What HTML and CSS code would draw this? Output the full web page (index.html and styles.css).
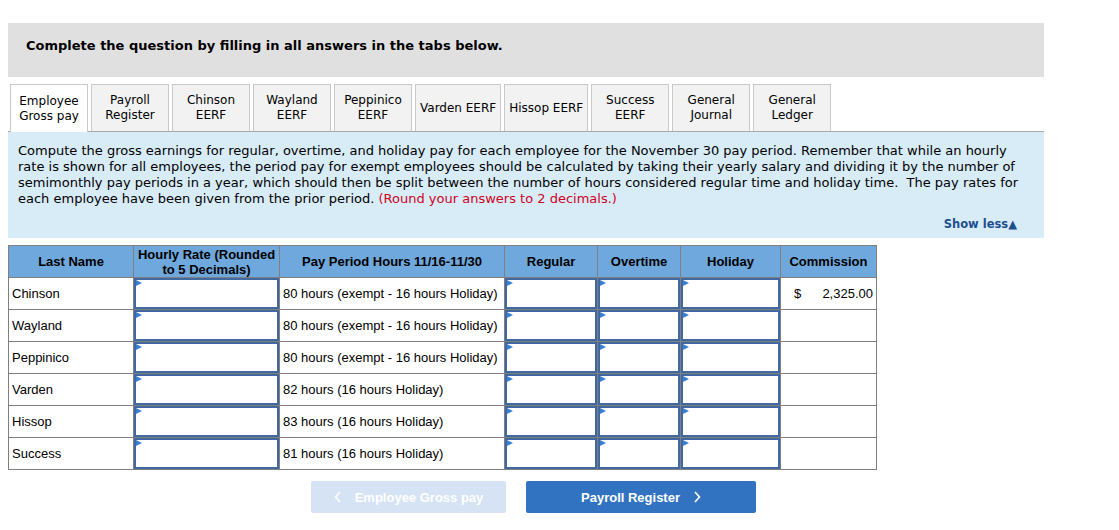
FILE: index.html
```html
<!DOCTYPE html>
<html lang="en">
<head>
    <meta charset="UTF-8">
    <title>Employee Gross pay</title>
    <link rel="stylesheet" href="styles.css">
</head>
<body>
<div class="page">
    <div class="prompt">Complete the question by filling in all answers in the tabs below.</div>

    <div class="tabs">
        <div class="tab active">Employee<br>Gross pay</div>
        <div class="tab">Payroll<br>Register</div>
        <div class="tab">Chinson<br>EERF</div>
        <div class="tab">Wayland<br>EERF</div>
        <div class="tab">Peppinico<br>EERF</div>
        <div class="tab single">Varden EERF</div>
        <div class="tab single">Hissop EERF</div>
        <div class="tab">Success<br>EERF</div>
        <div class="tab">General<br>Journal</div>
        <div class="tab">General<br>Ledger</div>
    </div>

    <div class="panel">
        <p class="instructions">Compute the gross earnings for regular, overtime, and holiday pay for each employee for the November 30 pay period. Remember that while an hourly<br>rate is shown for all employees, the period pay for exempt employees should be calculated by taking their yearly salary and dividing it by the number of<br>semimonthly pay periods in a year, which should then be split between the number of hours considered regular time and holiday time.&nbsp; The pay rates for<br>each employee have been given from the prior period. <span class="note">(Round your answers to 2 decimals.)</span></p>
        <div class="show-less">Show less&#9650;</div>
    </div>

    <table class="grid">
        <colgroup>
            <col class="c-name">
            <col class="c-rate">
            <col class="c-hours">
            <col class="c-reg">
            <col class="c-ot">
            <col class="c-hol">
            <col class="c-comm">
        </colgroup>
        <thead>
            <tr>
                <th>Last Name</th>
                <th>Hourly Rate (Rounded to 5 Decimals)</th>
                <th>Pay Period Hours 11/16-11/30</th>
                <th>Regular</th>
                <th>Overtime</th>
                <th>Holiday</th>
                <th>Commission</th>
            </tr>
        </thead>
        <tbody>
            <tr>
                <td class="name">Chinson</td>
                <td class="entry"><div class="field"><input type="text"></div></td>
                <td class="hours">80 hours (exempt - 16 hours Holiday)</td>
                <td class="entry"><div class="field"><input type="text"></div></td>
                <td class="entry"><div class="field"><input type="text"></div></td>
                <td class="entry"><div class="field"><input type="text"></div></td>
                <td class="money"><span class="cur">$</span><span class="amt">2,325.00</span></td>
            </tr>
            <tr>
                <td class="name">Wayland</td>
                <td class="entry"><div class="field"><input type="text"></div></td>
                <td class="hours">80 hours (exempt - 16 hours Holiday)</td>
                <td class="entry"><div class="field"><input type="text"></div></td>
                <td class="entry"><div class="field"><input type="text"></div></td>
                <td class="entry"><div class="field"><input type="text"></div></td>
                <td></td>
            </tr>
            <tr>
                <td class="name">Peppinico</td>
                <td class="entry"><div class="field"><input type="text"></div></td>
                <td class="hours">80 hours (exempt - 16 hours Holiday)</td>
                <td class="entry"><div class="field"><input type="text"></div></td>
                <td class="entry"><div class="field"><input type="text"></div></td>
                <td class="entry"><div class="field"><input type="text"></div></td>
                <td></td>
            </tr>
            <tr>
                <td class="name">Varden</td>
                <td class="entry"><div class="field"><input type="text"></div></td>
                <td class="hours">82 hours (16 hours Holiday)</td>
                <td class="entry"><div class="field"><input type="text"></div></td>
                <td class="entry"><div class="field"><input type="text"></div></td>
                <td class="entry"><div class="field"><input type="text"></div></td>
                <td></td>
            </tr>
            <tr>
                <td class="name">Hissop</td>
                <td class="entry"><div class="field"><input type="text"></div></td>
                <td class="hours">83 hours (16 hours Holiday)</td>
                <td class="entry"><div class="field"><input type="text"></div></td>
                <td class="entry"><div class="field"><input type="text"></div></td>
                <td class="entry"><div class="field"><input type="text"></div></td>
                <td></td>
            </tr>
            <tr>
                <td class="name">Success</td>
                <td class="entry"><div class="field"><input type="text"></div></td>
                <td class="hours">81 hours (16 hours Holiday)</td>
                <td class="entry"><div class="field"><input type="text"></div></td>
                <td class="entry"><div class="field"><input type="text"></div></td>
                <td class="entry"><div class="field"><input type="text"></div></td>
                <td></td>
            </tr>
        </tbody>
    </table>

    <div class="nav">
        <button class="nav-btn prev" disabled>
            <svg width="8" height="12" viewBox="0 0 8 12"><polyline points="6,1 1.5,6 6,11" fill="none" stroke="currentColor" stroke-width="1.6"/></svg>
            <span>Employee Gross pay</span>
        </button>
        <button class="nav-btn next">
            <span>Payroll Register</span>
            <svg width="8" height="12" viewBox="0 0 8 12"><polyline points="2,1 6.5,6 2,11" fill="none" stroke="currentColor" stroke-width="1.6"/></svg>
        </button>
    </div>
</div>
</body>
</html>
```

FILE: styles.css
```css
body {
    margin: 8px;
    background-color: #fff;
    font-family: "DejaVu Sans", Verdana, sans-serif;
    color: #000;
}

.page {
    width: 1036px;
}

.prompt {
    margin-top: 15px;
    height: 54px;
    box-sizing: border-box;
    padding: 15px 18px 0;
    background-color: #e0e0e0;
    font-size: 13px;
    font-weight: bold;
    line-height: 16px;
}

.tabs {
    display: flex;
    gap: 3px;
    margin-top: 7px;
    padding-left: 2px;
}

.tab {
    min-width: 78px;
    height: 47px;
    box-sizing: border-box;
    padding: 0;
    border: 1px solid #c9c9c9;
    border-bottom: none;
    background-color: #f2f2f2;
    display: flex;
    align-items: center;
    justify-content: center;
    text-align: center;
    font-size: 12px;
    line-height: 15px;
    white-space: nowrap;
}

.tab.single {
    padding: 0 4px;
}

.tab.active {
    background-color: #fff;
    height: 48px;
    margin-bottom: -1px;
    position: relative;
}

.panel {
    border-top: 1px solid #a9a9a9;
    background-color: #d8ecf8;
    padding: 11px 4px 6px 10px;
}

.instructions {
    margin: 0;
    font-size: 13px;
    line-height: 16px;
    white-space: nowrap;
}

.note {
    color: #d0021b;
}

.show-less {
    margin-top: 9px;
    text-align: right;
    padding-right: 23px;
    font-size: 11.5px;
    font-weight: bold;
    line-height: 16px;
    color: #1d4f8e;
}

.grid {
    margin-top: 7px;
    border-collapse: collapse;
    table-layout: fixed;
    width: 868px;
    font-family: "Liberation Sans", Arial, sans-serif;
    font-size: 13px;
}

.c-name { width: 125px; }
.c-rate { width: 146px; }
.c-hours { width: 225px; }
.c-reg { width: 93px; }
.c-ot { width: 83px; }
.c-hol { width: 100px; }
.c-comm { width: 96px; }

.grid th, .grid td {
    border: 1px solid #7f7f7f;
    padding: 0 3px;
}

.grid th {
    height: 31px;
    background-color: #6fa8dc;
    font-weight: bold;
    line-height: 15px;
    text-align: center;
}

.grid td {
    height: 31px;
}

.grid td.entry {
    padding: 0;
}

.field {
    position: relative;
    height: 31px;
}

.field::before {
    content: "";
    position: absolute;
    top: 2px;
    left: 2px;
    border-left: 6px solid #3a7ed6;
    border-top: 3px solid transparent;
    border-bottom: 3px solid transparent;
}

.field input {
    width: 100%;
    height: 100%;
    box-sizing: border-box;
    margin: 0;
    border: 2px solid #4169a1;
    background: #fff;
    font: inherit;
    padding: 0 4px;
}

.money .cur {
    float: left;
    padding-left: 10px;
}

.money .amt {
    float: right;
}

.nav {
    display: flex;
    gap: 20px;
    margin-top: 11px;
    padding-left: 303px;
}

.nav-btn {
    height: 32px;
    border: none;
    border-radius: 2px;
    display: flex;
    align-items: center;
    justify-content: center;
    gap: 13px;
    color: #fff;
    font-family: "Liberation Sans", Arial, sans-serif;
    font-size: 13px;
    font-weight: bold;
    cursor: pointer;
}

.nav-btn.prev {
    width: 195px;
    background-color: #d5e3f4;
}

.nav-btn.next {
    width: 230px;
    background-color: #3273c1;
}
```
